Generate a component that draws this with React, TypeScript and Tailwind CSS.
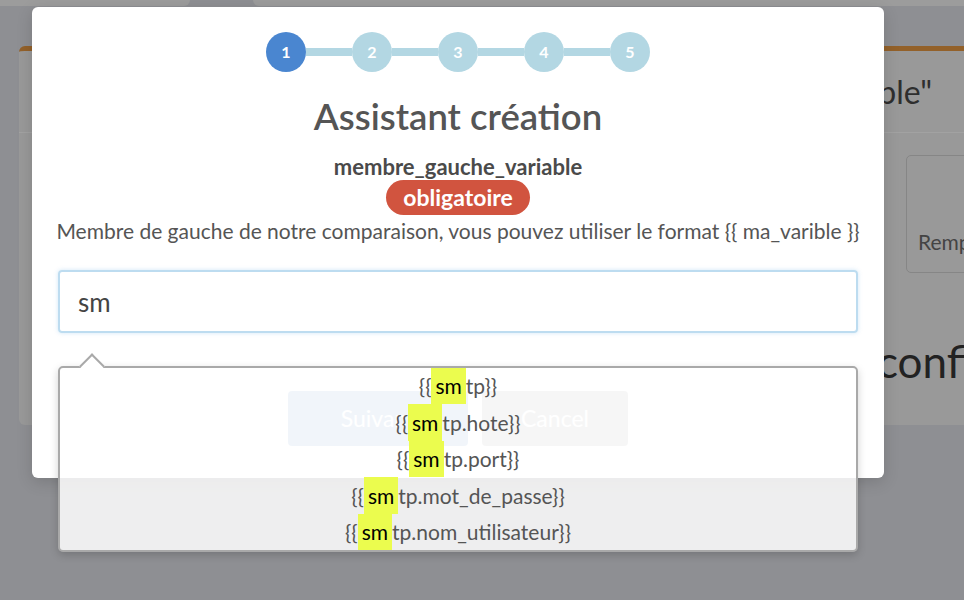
const font = { fontFamily: 'Lato, "Noto Sans", sans-serif' }

const steps = [1, 2, 3, 4, 5]

const suggestions = ['tp}}', 'tp.hote}}', 'tp.port}}', 'tp.mot_de_passe}}', 'tp.nom_utilisateur}}']

function Stepper() {
  return (
    <div className="flex items-center">
      {steps.map((step, index) => (
        <div key={step} className="flex items-center">
          {index > 0 ? <div className="h-[8px] w-[46px] bg-[#b3d7e3]" /> : null}
          <div
            className={
              step === 1
                ? 'flex h-10 w-10 items-center justify-center rounded-full bg-[#4a86d0] text-[16px] font-bold text-white'
                : 'flex h-10 w-10 items-center justify-center rounded-full bg-[#b3d7e3] text-[16px] font-bold text-white'
            }
          >
            {step}
          </div>
        </div>
      ))}
    </div>
  )
}

function Suggestions() {
  return (
    <div className="absolute left-[26px] top-[359px] h-[186px] w-[800px] rounded-[5px] border-2 border-[#a9a9a9] bg-white/85 shadow-[0_3px_8px_rgba(0,0,0,0.18)]">
      {/* little arrow pointing to the input */}
      <div className="absolute -top-[11px] left-[23px] h-[18px] w-[18px] rotate-45 border-l-2 border-t-2 border-[#a9a9a9] bg-white" />
      <ul className="relative flex flex-col">
        {suggestions.map((item) => (
          <li key={item} className="flex h-[36.4px] items-stretch justify-center text-[21px] text-[#555]">
            <span className="flex items-center">{'{{'}</span>
            <span className="flex items-center bg-[#ebfc4e] px-[4px] text-black">sm</span>
            <span className="flex items-center">{item}</span>
          </li>
        ))}
      </ul>
    </div>
  )
}

function Modal() {
  return (
    <div className="absolute left-[32px] top-[7px] w-[852px] rounded-[6px] bg-white px-[26px] pb-[32px] pt-[25px] shadow-[0_4px_16px_rgba(0,0,0,0.15)]">
      <div className="flex flex-col items-center">
        <Stepper />
        <h2 className="mt-[22px] text-[36.5px] font-semibold leading-[44px] text-[#555]">Assistant création</h2>
        <p className="mt-[16px] text-[22px] font-bold leading-[26px] text-[#4a4a4a]">membre_gauche_variable</p>
        <span className="flex h-[35px] w-[144px] items-center justify-center rounded-full bg-[#d1543f] text-[23px] font-bold text-white">
          obligatoire
        </span>
        <p className="mt-[2px] whitespace-nowrap text-[21px] leading-[28px] text-[#555]">
          Membre de gauche de notre comparaison, vous pouvez utiliser le format {'{{ ma_varible }}'}
        </p>
        <input
          defaultValue="sm"
          className="mt-[25px] h-[63px] w-[800px] rounded-[4px] border-2 border-[#bddcf0] px-[18px] text-[26px] text-[#444] shadow-[0_0_4px_rgba(120,180,230,0.35)] outline-none"
        />
        <div className="mt-[58px] flex gap-[14px]">
          <button type="button" className="h-[55px] w-[180px] rounded-[4px] bg-[#a3bfe0] text-[23px] text-white">
            Suivant
          </button>
          <button type="button" className="h-[55px] w-[146px] rounded-[4px] bg-[#c4c4c4] text-[23px] text-white">
            Cancel
          </button>
        </div>
      </div>
      <Suggestions />
    </div>
  )
}

export default function App() {
  return (
    <div className="relative h-[600px] w-[964px] overflow-hidden bg-[#8e8f93]" style={font}>
      {/* dimmed page behind the modal */}
      <div className="flex h-[6px]">
        <div className="w-[190px] rounded-br-[6px] bg-[#9c9c9c]" />
        <div className="ml-[63px] flex-1 rounded-bl-[6px] bg-[#9c9c9c]" />
      </div>
      <div className="ml-[19px] mt-[40px] h-[379px] w-[1000px] rounded-[6px] border-t-[5px] border-[#93612a] bg-[#999999]">
        <div className="flex h-[82px] items-center border-b border-[#a2a2a2]">
          <div className="w-[913px] text-right text-[32px] text-[#2e2e2e]">Édition "membre_gauche_variable"</div>
        </div>
        <div className="ml-[887px] mt-[22px] flex h-[118px] w-[120px] items-end rounded-[5px] border border-[#868686] px-[11px] pb-[15px] text-[21px] text-[#444]">
          Remplacer
        </div>
        <p className="ml-[858px] mt-[62px] text-[44px] leading-[52px] text-[#222]">configuration</p>
      </div>
      <Modal />
    </div>
  )
}
